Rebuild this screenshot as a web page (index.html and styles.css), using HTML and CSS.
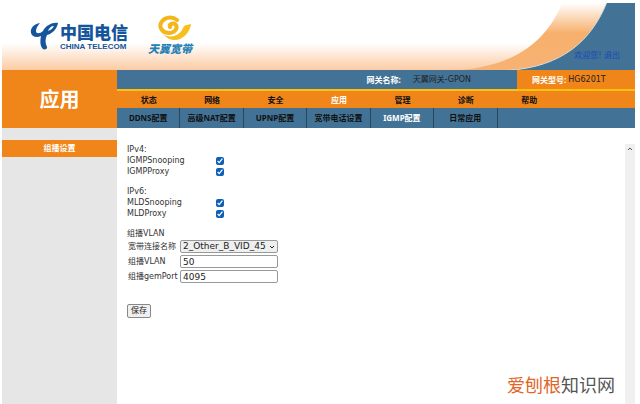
FILE: index.html
```html
<!DOCTYPE html>
<html lang="zh-CN">
<head>
    <meta charset="UTF-8">
    <meta name="viewport" content="width=device-width, initial-scale=1.0">
    <title>天翼网关</title>
    <link rel="stylesheet" href="styles.css">
</head>
<body>
    <header class="header">
        <svg class="header-art" viewBox="0 0 633 67" preserveAspectRatio="xMaxYMax slice" aria-hidden="true">
            <defs>
                <linearGradient id="band" x1="0" y1="0" x2="0" y2="1">
                    <stop offset="0" stop-color="#fff"/>
                    <stop offset="0.45" stop-color="#f7b06c"/>
                    <stop offset="1" stop-color="#f7b274"/>
                </linearGradient>
            </defs>
            <path fill="url(#band)" d="M560 0C546 36 515 62 460 67H520C562 64 590 36 605 0Z"/>
            <path fill="#427396" stroke="#d8dcd8" d="M605 -1C590 36 562 64 505 67.500H640V-1Z"/>
        </svg>
        <div class="brand">
            <svg class="brand-icon" viewBox="0 0 28 28" aria-hidden="true">
                <path fill="#14559b" d="M10 1C4 2 0 6 1 11 2 15 7 16 11 14 10 19 10 24 13 27 14 28 18 27 17 25 15 21 15 17 17 13 22 12 27 7 28 1 23 0 16 3 13 9 10 12 6 12 6 9 6 6 8 3 10 1ZM18 9C19 6 21 4 24 4 23 6 21 8 18 9Z"/>
            </svg>
            <div class="brand-text">
                <span class="brand-name">中国电信</span>
                <span class="brand-latin">CHINA TELECOM</span>
            </div>
        </div>
        <div class="product">
            <svg class="product-icon" viewBox="0 0 34 27" aria-hidden="true">
                <path fill="none" stroke="#f3b71b" stroke-width="4" stroke-linecap="round" d="M12 12C11 9 16 7 18 10 20 14 16 18 11 18 4 18 1 12 3 8 6 2 14 1 19 5"/>
                <path fill="#f6bf1c" d="M5 19C14 25 23 19 25 13 27 9 30 10 33 9 32 20 17 33 5 19Z"/>
            </svg>
            <span class="product-name">天翼宽带</span>
        </div>
        <div class="account">欢迎您! <a href="#">退出</a></div>
    </header>

    <div class="top">
        <h1 class="section-title">应用</h1>
        <div class="bars">
            <div class="info">
                <div class="info-name"><b>网关名称:</b><span>天翼网关-GPON</span></div>
                <div class="info-model"><b>网关型号:</b><span>HG6201T</span></div>
            </div>
            <nav class="menu">
                <a href="#">状态</a>
                <a href="#">网络</a>
                <a href="#">安全</a>
                <a href="#" class="active">应用</a>
                <a href="#">管理</a>
                <a href="#">诊断</a>
                <a href="#">帮助</a>
            </nav>
            <nav class="submenu">
                <a href="#">DDNS配置</a>
                <a href="#">高级NAT配置</a>
                <a href="#">UPNP配置</a>
                <a href="#">宽带电话设置</a>
                <a href="#" class="active">IGMP配置</a>
                <a href="#">日常应用</a>
            </nav>
        </div>
    </div>

    <div class="page">
        <aside class="sidebar">
            <a href="#" class="side-link">组播设置</a>
        </aside>
        <main class="content">
            <form class="form">
                <section class="group">
                    <p>IPv4:</p>
                    <div class="check-row"><label for="igmpSnooping">IGMPSnooping</label><input type="checkbox" id="igmpSnooping" checked></div>
                    <div class="check-row"><label for="igmpProxy">IGMPProxy</label><input type="checkbox" id="igmpProxy" checked></div>
                </section>
                <section class="group">
                    <p>IPv6:</p>
                    <div class="check-row"><label for="mldSnooping">MLDSnooping</label><input type="checkbox" id="mldSnooping" checked></div>
                    <div class="check-row"><label for="mldProxy">MLDProxy</label><input type="checkbox" id="mldProxy" checked></div>
                </section>
                <section class="group">
                    <p>组播VLAN</p>
                    <div class="field">
                        <label for="wanName">宽带连接名称</label>
                        <div class="select-box">
                            <select id="wanName">
                                <option>2_Other_B_VID_45</option>
                            </select>
                            <svg class="caret" viewBox="0 0 6 4" aria-hidden="true"><path d="M1 1l2 2 2-2"/></svg>
                        </div>
                    </div>
                    <div class="field">
                        <label for="vlan">组播VLAN</label>
                        <input type="text" id="vlan" value="50">
                    </div>
                    <div class="field">
                        <label for="gemPort">组播gemPort</label>
                        <input type="text" id="gemPort" value="4095">
                    </div>
                </section>
                <button type="button" class="save">保存</button>
            </form>
            <div class="scrollbar">
                <svg viewBox="0 0 10 10" aria-hidden="true"><path d="M3 6l2-2 2 2"/></svg>
            </div>
        </main>
    </div>

    <div class="watermark"><span>爱刨根</span>知识网</div>
</body>
</html>
```
FILE: styles.css
```css
* {
    margin: 0;
    padding: 0;
    box-sizing: border-box;
}

body {
    min-height: 100vh;
    padding: 3px 5px 0 2px;
    display: flex;
    flex-direction: column;
    background: #fff;
    color: #333;
    font: 8px/11px "DejaVu Sans", "Noto Sans CJK SC", sans-serif;
}

a {
    color: inherit;
    text-decoration: none;
}

/* Header */
.header {
    position: relative;
    display: flex;
    align-items: flex-start;
    height: 67px;
    padding: 12px 15px 0 28px;
    background: linear-gradient(#fff 60%, #fbcba3);
}

.header-art {
    position: absolute;
    inset: 0;
    width: 100%;
    height: 100%;
}

.brand {
    display: flex;
    gap: 2px;
    padding-top: 7px;
    color: #14559b;
}

.brand-icon {
    width: 28px;
    height: 28px;
}

.brand-text {
    display: flex;
    flex-direction: column;
    white-space: nowrap;
}

.brand-name {
    font: 900 17px/20px "Noto Sans CJK SC", sans-serif;
}

.brand-latin {
    font: bold 8px/10px "Liberation Sans", sans-serif;
}

.product {
    display: flex;
    flex-direction: column;
    align-items: flex-end;
    margin-left: 20px;
}

.product-icon {
    width: 34px;
    height: 27px;
}

.product-name {
    color: #2581b5;
    font: italic 900 11px/12px "Noto Sans CJK SC", sans-serif;
}

.account {
    position: relative;
    align-self: flex-end;
    margin-left: auto;
    padding-bottom: 9px;
    color: #1848b8;
}

/* Title and menus */
.top {
    display: flex;
    background: #427396;
}

.section-title {
    width: 115px;
    flex: none;
    display: flex;
    align-items: center;
    justify-content: center;
    background: #f08519;
    color: #fff;
    font: bold 20px/24px "Noto Sans CJK SC", sans-serif;
}

.bars {
    flex: 1;
}

.info {
    display: flex;
    line-height: 19px;
    color: #222;
}

.info b {
    color: #fff;
    font-family: "Noto Sans", "Noto Sans CJK SC", sans-serif;
}

.info-name {
    flex: 1;
    display: flex;
    justify-content: flex-end;
    gap: 12px;
    padding-right: 46px;
}

.info-model {
    width: 118px;
    display: flex;
    gap: 2px;
    padding-left: 15px;
    background: #f08519;
}

.menu,
.submenu {
    display: grid;
    grid-template-columns: repeat(7, 1fr);
    padding-right: 74px;
    font-family: "Noto Sans", "Noto Sans CJK SC", sans-serif;
    font-weight: bold;
    text-align: center;
    color: #111;
    white-space: nowrap;
}

.menu {
    border-top: 2px solid #fcc010;
    background: #f08519;
    line-height: 17px;
}

.submenu {
    line-height: 20px;
}

.submenu a {
    border-right: 1px solid #27475e;
}

.menu .active,
.submenu .active {
    color: #fff;
}

/* Page body */
.page {
    flex: 1;
    display: flex;
}

.sidebar {
    width: 115px;
    flex: none;
    padding-top: 12px;
    background: #e7e6e6;
}

.side-link {
    display: block;
    background: #f08519;
    color: #fff;
    font-weight: bold;
    line-height: 17px;
    text-align: center;
}

.content {
    flex: 1;
    display: flex;
    justify-content: space-between;
    padding: 16px 0 0 10px;
}

.group {
    margin-bottom: 9px;
}

.check-row {
    display: flex;
    align-items: center;
    height: 11px;
}

.check-row label {
    width: 89px;
}

input[type="checkbox"] {
    width: 8px;
    height: 8px;
    accent-color: #0f5fb8;
}

.field {
    display: flex;
    align-items: center;
    height: 15px;
    padding-left: 1px;
}

.field label {
    width: 52px;
    white-space: nowrap;
}

.field input,
.field select {
    width: 98px;
    height: 13px;
    padding: 0 2px;
    border: 1px solid #999;
    border-radius: 2px;
    background: #fff;
    color: #222;
    font: inherit;
    font-size: 9px;
}

.field select {
    display: block;
    appearance: none;
    background: #efefef;
}

.select-box {
    position: relative;
}

.caret {
    position: absolute;
    top: 5px;
    right: 3px;
    width: 6px;
    height: 4px;
    fill: none;
    stroke: #222;
}

.save {
    margin-top: 11px;
    padding: 0 3px;
    border: 1px solid #888;
    border-radius: 2px;
    background: #efefef;
    color: #222;
    font: inherit;
    line-height: 12px;
}

.scrollbar {
    width: 10px;
    background: #f0f0f0;
}

.scrollbar svg {
    display: block;
    fill: none;
    stroke: #555;
}

/* Floating site mark */
.watermark {
    position: absolute;
    right: 25px;
    bottom: 8px;
    color: #555;
    font: 18px/24px "Noto Sans CJK SC", sans-serif;
}

.watermark span {
    color: #e0662a;
}
```
